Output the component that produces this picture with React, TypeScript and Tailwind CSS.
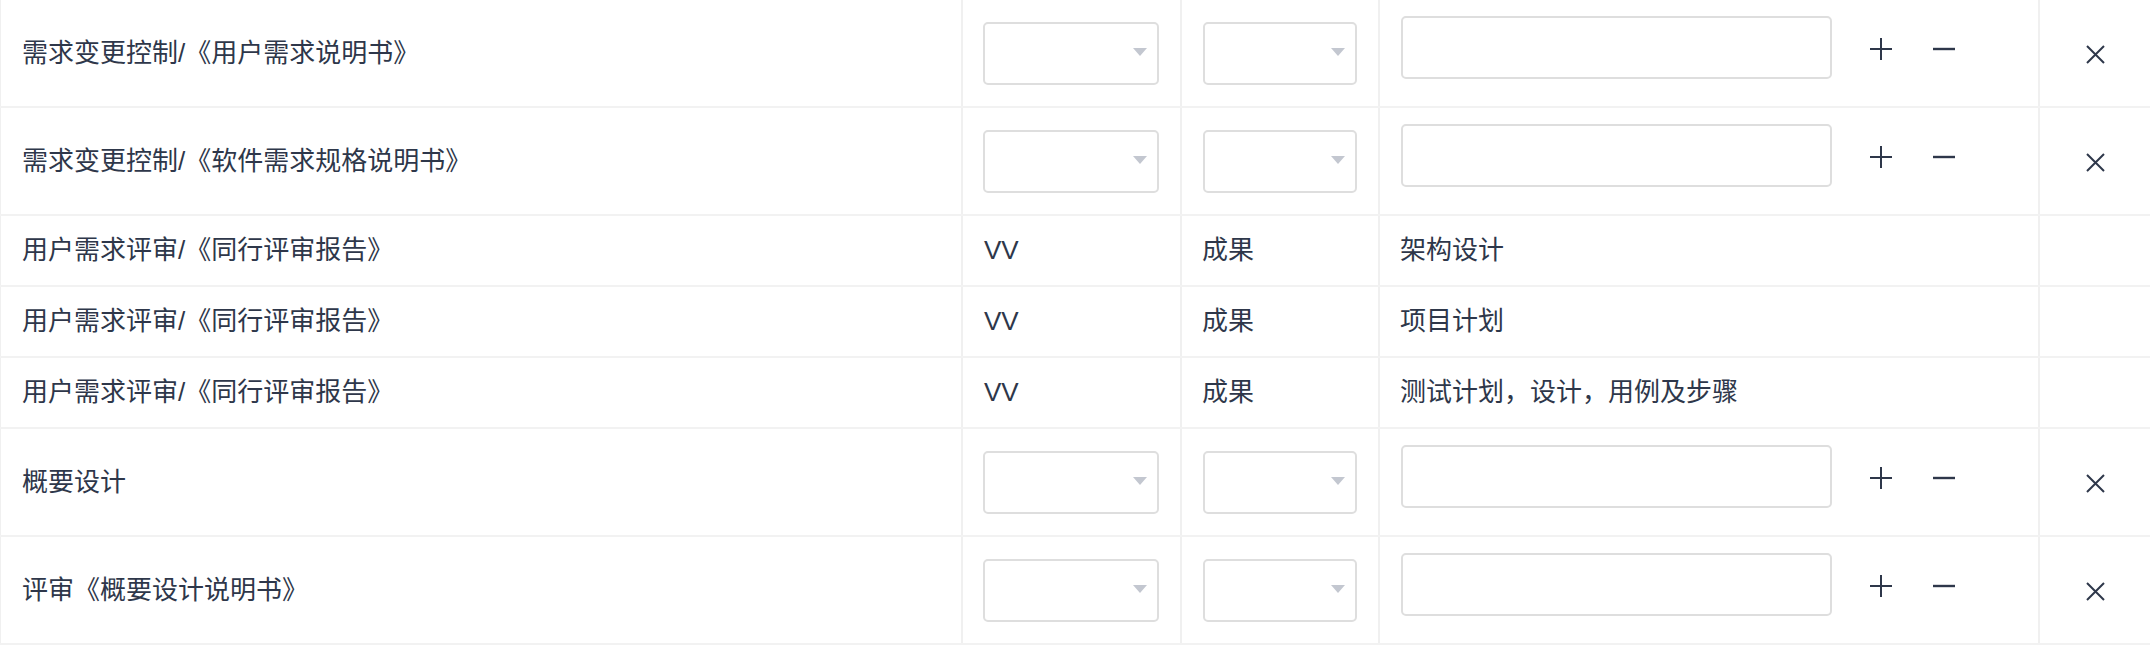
import type { ReactNode } from 'react'

type Row =
  | { kind: 'form'; title: string }
  | { kind: 'text'; title: string; type: string; result: string; detail: string }

const ROWS: Row[] = [
  { kind: 'form', title: '需求变更控制/《用户需求说明书》' },
  { kind: 'form', title: '需求变更控制/《软件需求规格说明书》' },
  { kind: 'text', title: '用户需求评审/《同行评审报告》', type: 'VV', result: '成果', detail: '架构设计' },
  { kind: 'text', title: '用户需求评审/《同行评审报告》', type: 'VV', result: '成果', detail: '项目计划' },
  { kind: 'text', title: '用户需求评审/《同行评审报告》', type: 'VV', result: '成果', detail: '测试计划，设计，用例及步骤' },
  { kind: 'form', title: '概要设计' },
  { kind: 'form', title: '评审《概要设计说明书》' },
]

function SelectBox({ width }: { width: string }) {
  return (
    <div className={`${width} h-[63px] rounded-[5px] border-2 border-[#dedede] bg-white flex items-center justify-end pr-[10px]`}>
      <svg width="14" height="8" viewBox="0 0 14 8" className="mt-[-2px]">
        <path d="M0 0h14L7 8z" fill="#c3c7d0" />
      </svg>
    </div>
  )
}

function Cell({ children, className = '' }: { children?: ReactNode; className?: string }) {
  return <div className={`border-l-2 border-[#f0f0f0] flex items-center ${className}`}>{children}</div>
}

export default function App() {
  return (
    <div className="w-[2150px] h-[646px] bg-white text-[26px] text-[#2e374a] font-['Liberation_Sans','Noto_Sans_CJK_SC',sans-serif]">
      {ROWS.map((row, i) => (
        <div
          key={i}
          className={`grid grid-cols-[961px_219px_198px_660px_112px] border-b-2 border-[#f2f2f2] ${row.kind === 'form' ? 'h-[108px]' : 'h-[71px]'}`}
        >
          <div className="border-l border-[#f0f0f0] flex items-center pl-[21px]">{row.title}</div>
          {row.kind === 'form' ? (
            <>
              <Cell className="pl-[20px]">
                <SelectBox width="w-[176px]" />
              </Cell>
              <Cell className="pl-[21px]">
                <SelectBox width="w-[154px]" />
              </Cell>
              <Cell className="pl-[21px] pb-[11px]">
                <div className="w-[431px] h-[63px] rounded-[5px] border-2 border-[#dedede] bg-white" />
                <svg width="22" height="22" viewBox="0 0 22 22" className="ml-[38px] mt-[2px]">
                  <path d="M11 0v22M0 11h22" stroke="currentColor" strokeWidth="2" />
                </svg>
                <svg width="22" height="22" viewBox="0 0 22 22" className="ml-[41px] mt-[2px]">
                  <path d="M0 11h22" stroke="currentColor" strokeWidth="2.4" />
                </svg>
              </Cell>
              <Cell className="justify-center pt-[2px]">
                <svg width="19" height="19" viewBox="0 0 19 19">
                  <path d="M1 1l17 17M18 1L1 18" stroke="currentColor" strokeWidth="2" />
                </svg>
              </Cell>
            </>
          ) : (
            <>
              <Cell className="pl-[21px]">{row.type}</Cell>
              <Cell className="pl-[20px]">{row.result}</Cell>
              <Cell className="pl-[20px]">{row.detail}</Cell>
              <Cell />
            </>
          )}
        </div>
      ))}
    </div>
  )
}
